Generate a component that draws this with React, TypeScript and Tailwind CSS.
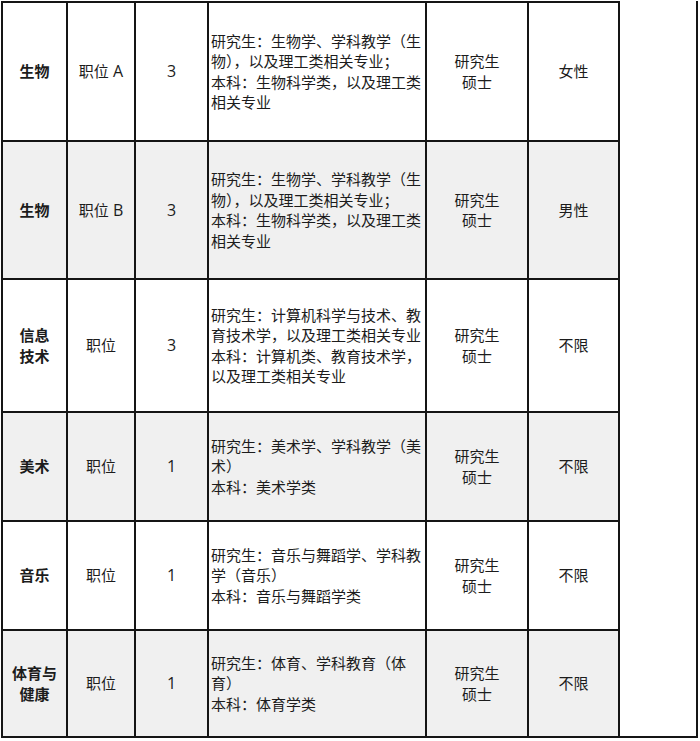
import React from "react";

type Row = {
  subject: string[];
  pos: string;
  posLetter?: string;
  num: string;
  major: string[];
  degree: string[];
  gender: string;
  gray: boolean;
  h: string;
};

const rows: Row[] = [
  {
    subject: ["生物"],
    pos: "职位",
    posLetter: "A",
    num: "3",
    major: ["研究生：生物学、学科教学（生", "物），以及理工类相关专业；", "本科：生物科学类，以及理工类", "相关专业"],
    degree: ["研究生", "硕士"],
    gender: "女性",
    gray: false,
    h: "h-[139px]",
  },
  {
    subject: ["生物"],
    pos: "职位",
    posLetter: "B",
    num: "3",
    major: ["研究生：生物学、学科教学（生", "物），以及理工类相关专业；", "本科：生物科学类，以及理工类", "相关专业"],
    degree: ["研究生", "硕士"],
    gender: "男性",
    gray: true,
    h: "h-[138px]",
  },
  {
    subject: ["信息", "技术"],
    pos: "职位",
    num: "3",
    major: ["研究生：计算机科学与技术、教", "育技术学，以及理工类相关专业", "本科：计算机类、教育技术学，", "以及理工类相关专业"],
    degree: ["研究生", "硕士"],
    gender: "不限",
    gray: false,
    h: "h-[133px]",
  },
  {
    subject: ["美术"],
    pos: "职位",
    num: "1",
    major: ["研究生：美术学、学科教学（美", "术）", "本科：美术学类"],
    degree: ["研究生", "硕士"],
    gender: "不限",
    gray: true,
    h: "h-[109px]",
  },
  {
    subject: ["音乐"],
    pos: "职位",
    num: "1",
    major: ["研究生：音乐与舞蹈学、学科教", "学（音乐）", "本科：音乐与舞蹈学类"],
    degree: ["研究生", "硕士"],
    gender: "不限",
    gray: false,
    h: "h-[109px]",
  },
  {
    subject: ["体育与", "健康"],
    pos: "职位",
    num: "1",
    major: ["研究生：体育、学科教育（体", "育）", "本科：体育学类"],
    degree: ["研究生", "硕士"],
    gender: "不限",
    gray: true,
    h: "h-[107px]",
  },
];

const cell = "flex flex-col items-center justify-center text-center border-r-2 border-b-2 border-[#151515]";

export default function App() {
  return (
    <div
      className="w-[700px] h-[741px] bg-white pl-px pt-px text-[15px] leading-[20.5px] text-[#1c1c1c]"
      style={{ fontFamily: '"Open Sans", "Noto Sans CJK SC", sans-serif' }}
    >
      <div className="flex">
        <div className="flex flex-col border-l-2 border-t-2 border-[#151515]">
          {rows.map((r, i) => (
            <div key={i} className={`flex ${r.h} ${r.gray ? "bg-[#f0f0f0]" : "bg-white"}`}>
              <div className={`${cell} w-[65px] font-bold`}>
                {r.subject.map((s, j) => (
                  <div key={j}>{s}</div>
                ))}
              </div>
              <div className={`${cell} w-[68px]`}>
                <div className="whitespace-nowrap">
                  {r.pos}
                  {r.posLetter ? <span className="text-[16px]"> {r.posLetter}</span> : null}
                </div>
              </div>
              <div className={`${cell} w-[73px] text-[16px]`}>{r.num}</div>
              <div className={`${cell} w-[218px] !items-start !text-left pl-[2px]`}>
                {r.major.map((s, j) => (
                  <div key={j} className="whitespace-nowrap">{s}</div>
                ))}
              </div>
              <div className={`${cell} w-[102px]`}>
                {r.degree.map((s, j) => (
                  <div key={j}>{s}</div>
                ))}
              </div>
              <div className={`${cell} w-[91px]`}>{r.gender}</div>
            </div>
          ))}
        </div>
        <div className="w-[78px] border-r-2 border-b-2 border-[#151515]" />
      </div>
    </div>
  );
}
